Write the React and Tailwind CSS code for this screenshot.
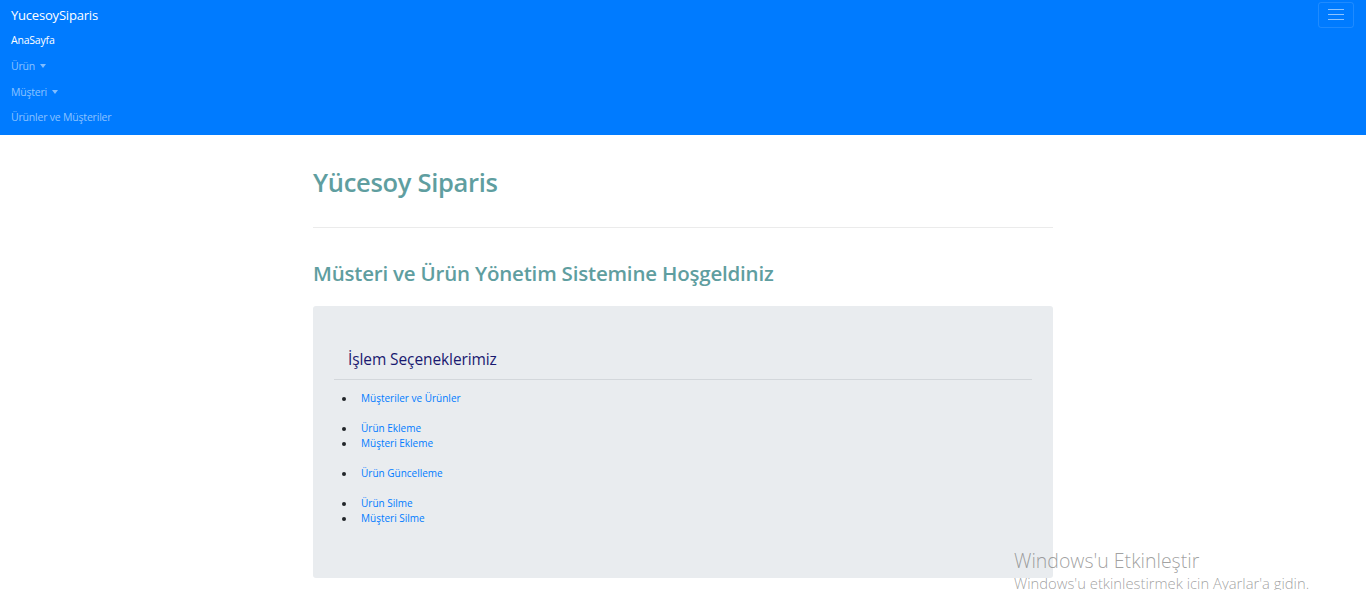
import React from "react";

const font = { fontFamily: '"Open Sans", "Noto Sans", "DejaVu Sans", sans-serif' };

function Caret() {
  return (
    <span className="inline-block ml-[5px] align-middle w-0 h-0 border-l-[3.5px] border-r-[3.5px] border-t-[4px] border-l-transparent border-r-transparent border-t-[rgba(255,255,255,0.5)] relative top-[-1px]" />
  );
}

function Item({ children }) {
  return (
    <li className="flex items-center h-[15px]">
      <span className="w-[4px] h-[4px] rounded-full bg-[#212529] ml-[8px] mr-[15px]" />
      <a className="text-[#007bff] text-[10px] leading-[15px]">{children}</a>
    </li>
  );
}

export default function App() {
  return (
    <div className="relative min-h-[590px] bg-white overflow-hidden" style={font}>
      <nav className="bg-[#007bff] h-[135px] px-[11px] pt-[1px]">
        <div className="flex items-center justify-between h-[27px]">
          <span className="text-white text-[13px] leading-[20px] tracking-[-0.2px]">YucesoySiparis</span>
          <button className="w-[36px] h-[26px] mr-[1px] border border-[rgba(255,255,255,0.12)] rounded-[3px] flex flex-col items-center justify-center gap-[4px]">
            <span className="block w-[16px] h-[1.3px] bg-[rgba(255,255,255,0.55)]" />
            <span className="block w-[16px] h-[1.3px] bg-[rgba(255,255,255,0.55)]" />
            <span className="block w-[16px] h-[1.3px] bg-[rgba(255,255,255,0.55)]" />
          </button>
        </div>
        <ul className="text-[10.5px] tracking-[-0.2px]">
          <li className="h-[26px] flex items-center text-white">AnaSayfa</li>
          <li className="h-[26px] flex items-center text-[rgba(255,255,255,0.55)]">Ürün<Caret /></li>
          <li className="h-[25px] flex items-center text-[rgba(255,255,255,0.55)]">Müşteri<Caret /></li>
          <li className="h-[25px] flex items-center text-[rgba(255,255,255,0.55)]">Ürünler ve Müşteriler</li>
        </ul>
      </nav>

      <main className="w-[740px] mx-auto">
        <h1 className="mt-[31px] text-[#5f9ea0] text-[25.5px] leading-[32px] font-semibold tracking-[-0.3px]">Yücesoy Siparis</h1>
        <hr className="mt-[29px] border-0 border-t border-[#ebebeb]" />
        <h2 className="mt-[32px] text-[#5f9ea0] text-[20.5px] leading-[26px] font-semibold tracking-[-0.2px]">Müsteri ve Ürün Yönetim Sistemine Hoşgeldiniz</h2>
        <div className="mt-[20px] bg-[#e9ecef] rounded-[3px] h-[272px] px-[21px] pt-[44px]">
          <h4 className="text-[#191970] text-[15.5px] leading-[19px] font-medium pl-[14px] pb-[10px] border-b border-[#d3d7db] tracking-[-0.1px]">İşlem Seçeneklerimiz</h4>
          <ul className="mt-[11px]">
            <Item>Müşteriler ve Ürünler</Item>
            <li className="h-[15px]" />
            <Item>Ürün Ekleme</Item>
            <Item>Müşteri Ekleme</Item>
            <li className="h-[15px]" />
            <Item>Ürün Güncelleme</Item>
            <li className="h-[15px]" />
            <Item>Ürün Silme</Item>
            <Item>Müşteri Silme</Item>
          </ul>
        </div>
      </main>

      <div className="absolute left-[1014px] top-[548px] text-[rgba(120,120,120,0.7)] font-light pointer-events-none whitespace-nowrap">
        <div className="text-[19.5px] leading-[26px]">Windows'u Etkinleştir</div>
        <div className="text-[14.8px] leading-[18px]">Windows'u etkinlestirmek icin Ayarlar'a gidin.</div>
      </div>
    </div>
  );
}
